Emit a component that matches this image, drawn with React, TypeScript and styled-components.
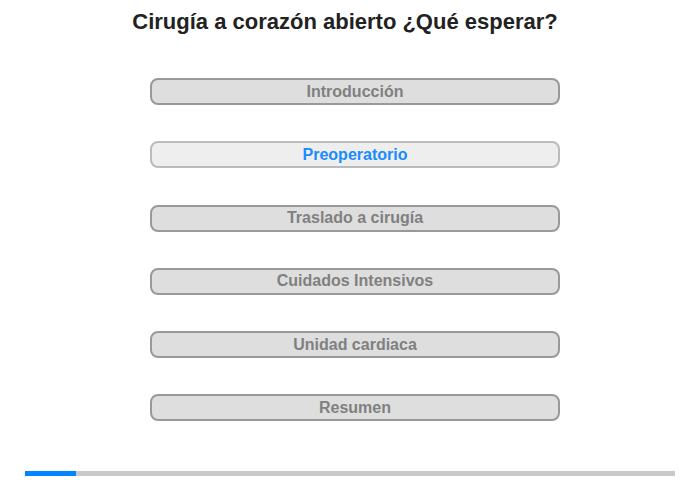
import React from "react";
import styled, { createGlobalStyle } from "styled-components";

const Global = createGlobalStyle`
  html, body { margin: 0; padding: 0; background: #fff; }
  body { font-family: "Liberation Sans", Arial, sans-serif; }
`;

const Page = styled.div`
  width: 700px;
  height: 480px;
  display: flex;
  flex-direction: column;
  box-sizing: border-box;
`;

const Title = styled.h1`
  margin: 9px 0 0;
  width: 690px;
  text-align: center;
  font-size: 22px;
  line-height: 25px;
  font-weight: bold;
  color: #222;
`;

const Menu = styled.nav`
  margin: 44px 0 0 150px;
  width: 410px;
  display: flex;
  flex-direction: column;
  gap: 36.3px;
`;

const Item = styled.div<{ $active?: boolean }>`
  box-sizing: border-box;
  height: 27px;
  border: 2px solid ${(p) => (p.$active ? "#bbb" : "#999")};
  border-radius: 8px;
  background: ${(p) => (p.$active ? "#eee" : "#dedede")};
  color: ${(p) => (p.$active ? "#1a8cff" : "#808080")};
  font-size: 16px;
  font-weight: bold;
  display: flex;
  align-items: center;
  justify-content: center;
  line-height: 1;
`;

const Progress = styled.div`
  margin: 50px 0 0 25px;
  width: 650px;
  height: 5px;
  background: #c8c8c8;
  display: flex;
`;

const Fill = styled.div`
  height: 100%;
  background: #0084ff;
`;

const items = [
  "Introducción",
  "Preoperatorio",
  "Traslado a cirugía",
  "Cuidados Intensivos",
  "Unidad cardiaca",
  "Resumen",
];

export default function App() {
  return (
    <Page>
      <Global />
      <Title>Cirugía a corazón abierto ¿Qué esperar?</Title>
      <Menu>
        {items.map((t, i) => (
          <Item key={t} $active={i === 1}>
            {t}
          </Item>
        ))}
      </Menu>
      <Progress>
        <Fill style={{ width: "51px" }} />
      </Progress>
    </Page>
  );
}
